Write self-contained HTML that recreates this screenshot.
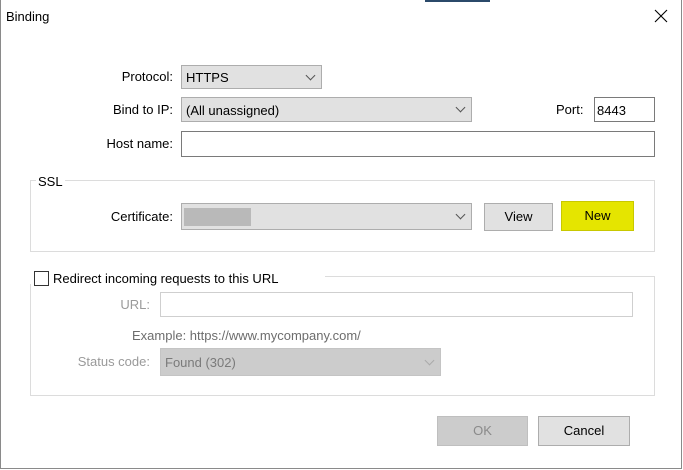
<!DOCTYPE html><html><head><style>
body{margin:0;width:683px;height:470px;background:#fff;font-family:"Liberation Sans",sans-serif;font-size:13px;color:#000;position:relative;overflow:hidden}
.a{position:absolute}
.cb{position:absolute;background:#e1e1e1;border:1px solid #adadad;box-sizing:border-box}
.in{position:absolute;background:#fff;border:1px solid #7a7a7a;box-sizing:border-box}
.lbl{position:absolute;line-height:15px;white-space:nowrap}
.r{text-align:right;width:150px}
.btn{position:absolute;background:#e1e1e1;border:1px solid #adadad;box-sizing:border-box;text-align:center}
.chev{position:absolute;width:6px;height:6px;border-right:1px solid #555;border-bottom:1px solid #555;transform:rotate(45deg)}
.grp{position:absolute;border:1px solid #dcdcdc;box-sizing:border-box}
</style></head><body>
<div class="a" style="left:0;top:0;width:682px;height:469px;border:1px solid #8a8a8a;border-top:none;box-sizing:border-box"></div>
<div class="a" style="left:425px;top:0;width:65px;height:2px;background:#2b4a6a"></div>
<div class="lbl" style="left:6px;top:9px;font-size:13px">Binding</div>
<svg class="a" style="left:654px;top:9px" width="14" height="14"><path d="M1 1L13 13M13 1L1 13" stroke="#000" stroke-width="1.1"/></svg>

<div class="lbl r" style="left:23px;top:69px">Protocol:</div>
<div class="cb" style="left:181px;top:65px;width:141px;height:24px"><span class="a" style="left:4px;top:4px">HTTPS</span><div class="chev" style="left:125px;top:6px"></div></div>
<div class="lbl r" style="left:23px;top:102px">Bind to IP:</div>
<div class="cb" style="left:181px;top:97px;width:291px;height:25px"><span class="a" style="left:4px;top:5px">(All unassigned)</span><div class="chev" style="left:275px;top:6px"></div></div>
<div class="lbl" style="left:556px;top:102px">Port:</div>
<div class="in" style="left:594px;top:97px;width:61px;height:25px"><span class="a" style="left:2px;top:5px">8443</span></div>
<div class="lbl r" style="left:23px;top:136px">Host name:</div>
<div class="in" style="left:181px;top:131px;width:474px;height:26px"></div>

<div class="grp" style="left:30px;top:180px;width:625px;height:72px"></div>
<div class="lbl" style="left:36px;top:174px;background:#fff;padding:0 2px">SSL</div>
<div class="lbl r" style="left:23px;top:209px">Certificate:</div>
<div class="cb" style="left:181px;top:203px;width:291px;height:27px"><div class="a" style="left:2px;top:4px;width:67px;height:18px;background:#b9b9b9"></div><div class="chev" style="left:275px;top:7px"></div></div>
<div class="btn" style="left:484px;top:203px;width:69px;height:28px;line-height:26px">View</div>
<div class="btn" style="left:561px;top:201px;width:73px;height:30px;line-height:28px;background:#e5e500;border:1px solid #c8c800">New</div>

<div class="grp" style="left:30px;top:276px;width:625px;height:120px"></div>
<div class="a" style="left:30px;top:270px;width:295px;height:14px;background:#fff"></div>
<div class="a" style="left:34px;top:271px;width:15px;height:15px;border:1px solid #333;box-sizing:border-box;background:#fff"></div>
<div class="lbl" style="left:53px;top:271px">Redirect incoming requests to this URL</div>
<div class="lbl r" style="left:0px;top:297px;color:#9a9a9a">URL:</div>
<div class="in" style="left:160px;top:292px;width:473px;height:25px;border-color:#cfcfcf"></div>
<div class="lbl" style="left:132px;top:328px;color:#6d6d6d">Example: https://www.mycompany.com/</div>
<div class="lbl r" style="left:0px;top:354px;color:#9a9a9a">Status code:</div>
<div class="cb" style="left:160px;top:348px;width:281px;height:28px;background:#cccccc;border-color:#c4c4c4;color:#7a7a7a"><span class="a" style="left:4px;top:6px">Found (302)</span><div class="chev" style="left:265px;top:8px;border-color:#aaa"></div></div>

<div class="btn" style="left:437px;top:416px;width:91px;height:30px;line-height:28px;background:#cccccc;border-color:#bfbfbf;color:#8a8a8a">OK</div>
<div class="btn" style="left:538px;top:416px;width:92px;height:30px;line-height:28px">Cancel</div>
</body></html>
